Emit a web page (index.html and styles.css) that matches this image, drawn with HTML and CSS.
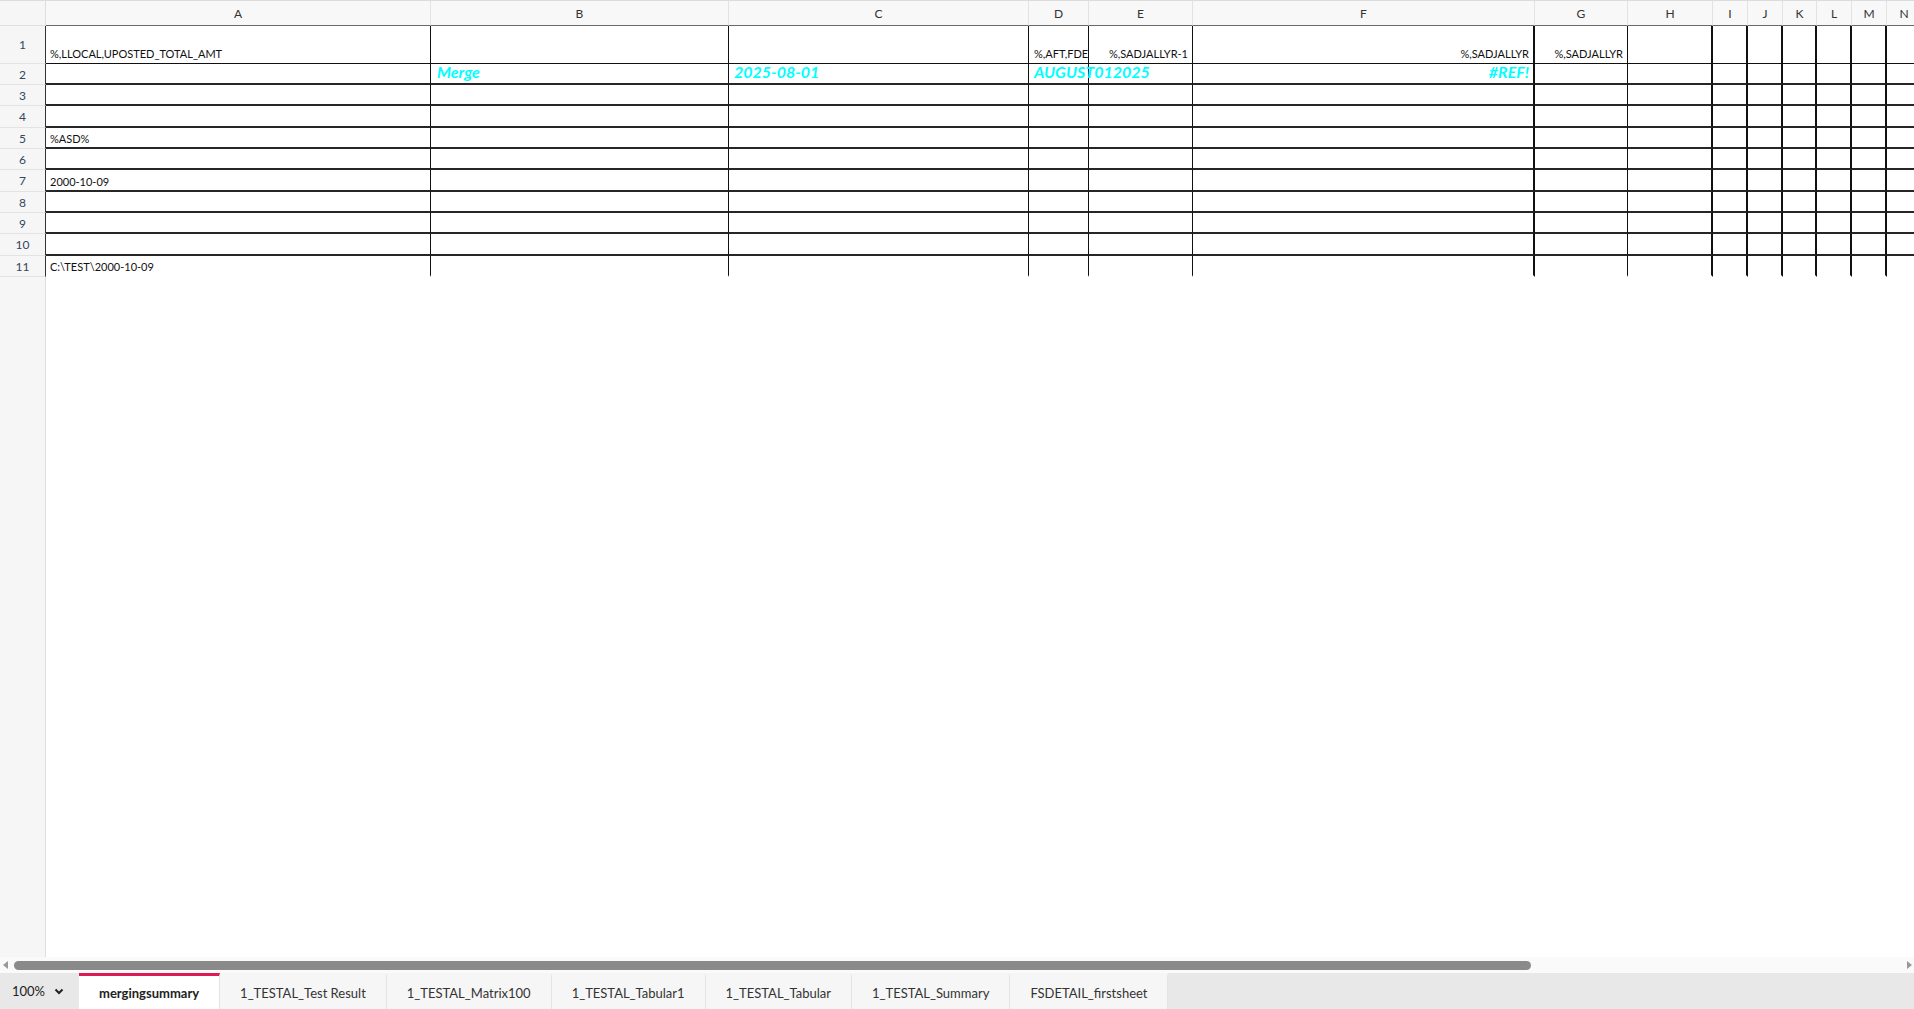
FILE: index.html
```html
<!DOCTYPE html>
<html lang="en">
<head>
<meta charset="utf-8">
<title>mergingsummary</title>
<link rel="stylesheet" href="styles.css">
</head>
<body>
<div class="app">
  <div class="sheet">
    <div class="grid">
      <div class="corner"></div>
      <div class="ch">A</div><div class="ch">B</div><div class="ch">C</div><div class="ch">D</div><div class="ch">E</div><div class="ch">F</div><div class="ch">G</div><div class="ch">H</div><div class="ch">I</div><div class="ch">J</div><div class="ch">K</div><div class="ch">L</div><div class="ch">M</div><div class="ch">N</div>

      <div class="rh">1</div>
      <div class="c r1">%,LLOCAL,UPOSTED_TOTAL_AMT</div><div class="c r1"></div><div class="c r1"></div><div class="c r1 pl5">%,AFT,FDE</div><div class="c r1 right">%,SADJALLYR-1</div><div class="c r1 right t2">%,SADJALLYR</div><div class="c r1 right">%,SADJALLYR</div><div class="c r1 t2"></div><div class="c r1 t2"></div><div class="c r1 t2"></div><div class="c r1 t2"></div><div class="c r1 t2"></div><div class="c r1 t2"></div><div class="c r1 t2"></div>

      <div class="rh">2</div>
      <div class="c"></div><div class="c cy pl6">Merge</div><div class="c cy pl5">2025-08-01</div><div class="c cy pl5 spill">AUGUST012025</div><div class="c"></div><div class="c right cy t2">#REF!</div><div class="c"></div><div class="c t2"></div><div class="c t2"></div><div class="c t2"></div><div class="c t2"></div><div class="c t2"></div><div class="c t2"></div><div class="c t2"></div>

      <div class="rh">3</div>
      <div class="c"></div><div class="c"></div><div class="c"></div><div class="c"></div><div class="c"></div><div class="c t2"></div><div class="c"></div><div class="c t2"></div><div class="c t2"></div><div class="c t2"></div><div class="c t2"></div><div class="c t2"></div><div class="c t2"></div><div class="c t2"></div>

      <div class="rh">4</div>
      <div class="c"></div><div class="c"></div><div class="c"></div><div class="c"></div><div class="c"></div><div class="c t2"></div><div class="c"></div><div class="c t2"></div><div class="c t2"></div><div class="c t2"></div><div class="c t2"></div><div class="c t2"></div><div class="c t2"></div><div class="c t2"></div>

      <div class="rh">5</div>
      <div class="c">%ASD%</div><div class="c"></div><div class="c"></div><div class="c"></div><div class="c"></div><div class="c t2"></div><div class="c"></div><div class="c t2"></div><div class="c t2"></div><div class="c t2"></div><div class="c t2"></div><div class="c t2"></div><div class="c t2"></div><div class="c t2"></div>

      <div class="rh">6</div>
      <div class="c"></div><div class="c"></div><div class="c"></div><div class="c"></div><div class="c"></div><div class="c t2"></div><div class="c"></div><div class="c t2"></div><div class="c t2"></div><div class="c t2"></div><div class="c t2"></div><div class="c t2"></div><div class="c t2"></div><div class="c t2"></div>

      <div class="rh">7</div>
      <div class="c">2000-10-09</div><div class="c"></div><div class="c"></div><div class="c"></div><div class="c"></div><div class="c t2"></div><div class="c"></div><div class="c t2"></div><div class="c t2"></div><div class="c t2"></div><div class="c t2"></div><div class="c t2"></div><div class="c t2"></div><div class="c t2"></div>

      <div class="rh">8</div>
      <div class="c"></div><div class="c"></div><div class="c"></div><div class="c"></div><div class="c"></div><div class="c t2"></div><div class="c"></div><div class="c t2"></div><div class="c t2"></div><div class="c t2"></div><div class="c t2"></div><div class="c t2"></div><div class="c t2"></div><div class="c t2"></div>

      <div class="rh">9</div>
      <div class="c"></div><div class="c"></div><div class="c"></div><div class="c"></div><div class="c"></div><div class="c t2"></div><div class="c"></div><div class="c t2"></div><div class="c t2"></div><div class="c t2"></div><div class="c t2"></div><div class="c t2"></div><div class="c t2"></div><div class="c t2"></div>

      <div class="rh">10</div>
      <div class="c"></div><div class="c"></div><div class="c"></div><div class="c"></div><div class="c"></div><div class="c t2"></div><div class="c"></div><div class="c t2"></div><div class="c t2"></div><div class="c t2"></div><div class="c t2"></div><div class="c t2"></div><div class="c t2"></div><div class="c t2"></div>

      <div class="rh">11</div>
      <div class="c last">C:\TEST\2000-10-09</div><div class="c last"></div><div class="c last"></div><div class="c last"></div><div class="c last"></div><div class="c last t2"></div><div class="c last"></div><div class="c last t2"></div><div class="c last t2"></div><div class="c last t2"></div><div class="c last t2"></div><div class="c last t2"></div><div class="c last t2"></div><div class="c last t2"></div>
    </div>
  </div>

  <div class="hscroll">
    <span class="arrow left"></span>
    <div class="track"><div class="thumb"></div></div>
    <span class="arrow right"></span>
  </div>

  <div class="tabbar">
    <div class="zoomsel">100%
      <svg class="chev" width="10" height="7" viewBox="0 0 10 7"><polyline points="1.5,1.5 5,5 8.5,1.5" fill="none" stroke="#222" stroke-width="2"/></svg>
    </div>
    <div class="tab active">mergingsummary</div>
    <div class="tab">1_TESTAL_Test Result</div>
    <div class="tab">1_TESTAL_Matrix100</div>
    <div class="tab">1_TESTAL_Tabular1</div>
    <div class="tab">1_TESTAL_Tabular</div>
    <div class="tab">1_TESTAL_Summary</div>
    <div class="tab">FSDETAIL_firstsheet</div>
  </div>
</div>
</body>
</html>
```
FILE: styles.css
```css
html, body {
  margin: 0;
  padding: 0;
  height: 100%;
  overflow: hidden;
  background: #fff;
  font-family: Lato, "Open Sans", "Liberation Sans", sans-serif;
  color: #222;
}

.app {
  display: flex;
  flex-direction: column;
  height: 100vh;
}

.sheet {
  flex: 1;
  overflow: hidden;
  background: linear-gradient(to right, #f6f6f6 45px, #dedede 45px, #dedede 46px, #fff 46px);
}

.grid {
  display: grid;
  grid-template-columns: 46px 385px 298px 300px 60px 104px 342px 93px 85px 35px 35px 34px 35px 35px 35px;
  grid-template-rows: 26px 38px 21px 21px 22px 21px 21px 22px 21px 21px 22px 21px;
  width: 1921px;
}

.corner {
  background: #f6f6f6;
  border-top: 1px solid #dcdcdc;
  border-bottom: 1px solid #e0e0e0;
  border-right: 1px solid #dedede;
}

.ch {
  background: #f8f8f8;
  border-top: 1px solid #dcdcdc;
  border-right: 1px solid #e2e2e2;
  border-bottom: 1px solid #6a6a6a;
  font-size: 12px;
  color: #333;
  display: flex;
  align-items: center;
  justify-content: center;
}

.rh {
  background: #f6f6f6;
  border-bottom: 1px solid #e3e3e3;
  border-right: 1px solid #333;
  font-size: 12px;
  color: #34465c;
  display: flex;
  align-items: center;
  justify-content: center;
}

.c {
  position: relative;
  border-right: 1px solid #111;
  border-bottom: 2px solid #262626;
  font-size: 11px;
  line-height: 13px;
  color: #111;
  display: flex;
  align-items: flex-end;
  justify-content: flex-start;
  padding: 0 4px 2px 4px;
  white-space: nowrap;
  box-sizing: border-box;
}

.c.r1 {
  border-bottom: 1px solid #111;
  padding-bottom: 3px;
}

.c.last {
  border-bottom: 2px solid transparent;
}

.c.t2 {
  border-right-width: 2px;
}

.c.right {
  justify-content: flex-end;
  padding-right: 4px;
}

.c.pl5 { padding-left: 5px; }
.c.pl6 { padding-left: 6px; }

.c.cy {
  color: #00ffff;
  font-size: 16px;
  font-weight: 700;
  font-style: italic;
  line-height: 18px;
  padding-bottom: 2px;
}

.c.spill {
  overflow: visible;
  z-index: 1;
}

.hscroll {
  height: 16px;
  background: #fafafa;
  display: flex;
  align-items: center;
  flex-shrink: 0;
}

.arrow {
  width: 0;
  height: 0;
  border-top: 4px solid transparent;
  border-bottom: 4px solid transparent;
}

.arrow.left {
  border-right: 5px solid #999;
  margin: 0 6px 0 3px;
}

.arrow.right {
  border-left: 5px solid #999;
  margin: 0 2px 0 374px;
}

.track {
  flex: 1;
  display: flex;
}

.thumb {
  width: 1517px;
  height: 9px;
  border-radius: 5px;
  background: #8a8a8a;
}

.tabbar {
  height: 36px;
  background: #e8e8e8;
  display: flex;
  flex-shrink: 0;
  font-size: 13px;
}

.zoomsel {
  width: 79px;
  box-sizing: border-box;
  padding-left: 12px;
  display: flex;
  align-items: center;
  color: #222;
}

.chev {
  margin-left: 9px;
}

.tab {
  display: flex;
  align-items: center;
  justify-content: center;
  padding: 0 20px;
  background: #f6f6f6;
  border-right: 1px solid #e4e4e4;
  border-top: 3px solid transparent;
  color: #333;
}

.tab.active {
  background: #fff;
  border-top-color: #de1a55;
  font-weight: 700;
  color: #222;
}
```
